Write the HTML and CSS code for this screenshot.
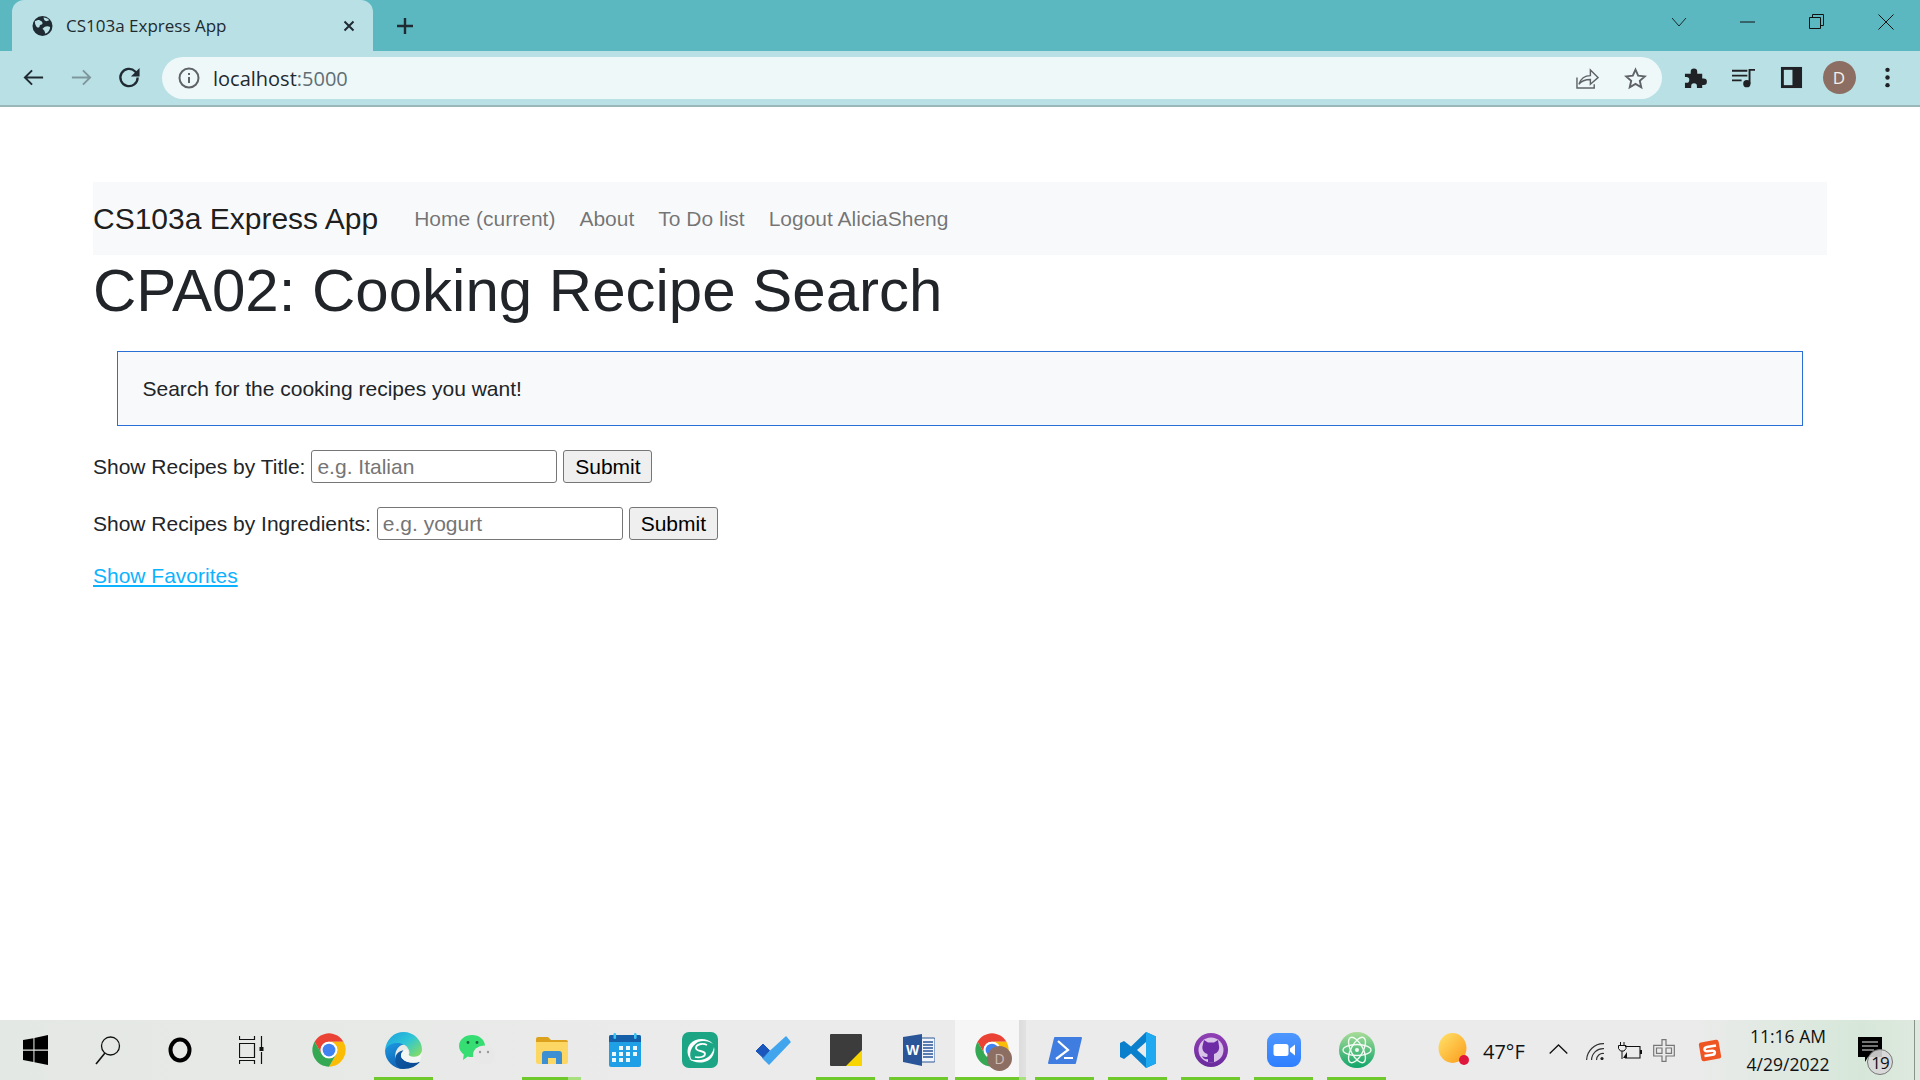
FILE: index.html
```html
<!DOCTYPE html>
<html lang="en">
<head>
<meta charset="utf-8">
<title>CS103a Express App</title>
<link rel="stylesheet" href="styles.css">
</head>
<body>
<header class="browser">
  <div class="tabstrip">
    <div class="tab">
      <svg class="favicon" viewBox="0 0 22 22"><circle cx="11" cy="11" r="10.5" fill="#202a33"/><path d="M3 6c2-1 4-2 5-1s3 1 3 3-3 1-3 3-2 2-3 1-2-3-2-6zM12 2c2 0 5 1 6 3l-3 1-2-1zM13 12c2-1 4-1 6 0 0 3-2 6-5 7l-1-3-2-2z" fill="#b8e0e5"/></svg>
      <span class="tab-title">CS103a Express App</span>
      <svg class="tab-close" viewBox="0 0 12 12"><path d="M1.500 1.500l9 9M10.500 1.500l-9 9" stroke="#202a33" stroke-width="2"/></svg>
    </div>
    <svg class="newtab" viewBox="0 0 18 18"><path d="M9 1v16M1 9h16" stroke="#202a33" stroke-width="2.400"/></svg>
    <div class="winctl">
      <svg class="winbtn chev" viewBox="0 0 16 16"><path d="M1 4l7 8 7-8" fill="none" stroke="#1a2a2c" stroke-width="1"/></svg>
      <svg class="winbtn" viewBox="0 0 16 16"><path d="M0 8h15" stroke="#111" stroke-width="1"/></svg>
      <svg class="winbtn" viewBox="0 0 16 16"><path d="M.5 3.500h11v11H.5zM3.500 3.500V.5h11v11h-3" fill="none" stroke="#111" stroke-width="1"/></svg>
      <svg class="winbtn" viewBox="0 0 16 16"><path d="M.5.5l15 15M15.500.5l-15 15" stroke="#111" stroke-width="1"/></svg>
    </div>
  </div>
  <div class="toolbar">
    <div class="btn"><svg viewBox="0 0 24 24"><path d="M22 12H3M10.500 4.500L3 12l7.500 7.500" fill="none" stroke="#202a33" stroke-width="2"/></svg></div>
    <div class="btn"><svg viewBox="0 0 24 24"><path d="M2 12h19M13.500 4.500L21 12l-7.500 7.500" fill="none" stroke="#7f979c" stroke-width="2"/></svg></div>
    <div class="btn"><svg viewBox="0 0 24 24"><path d="M20.500 12a9 9 0 1 1-2.600-6.300L21 9" fill="none" stroke="#202a33" stroke-width="2.400"/><path d="M22.500 2v9h-9z" fill="#202a33"/></svg></div>
    <div class="omnibox">
      <svg class="info" viewBox="0 0 22 22"><circle cx="11" cy="11" r="9.500" fill="none" stroke="#5f6368" stroke-width="2"/><path d="M10 10h2v6h-2zM10 6h2v2h-2z" fill="#5f6368"/></svg>
      <span class="url">localhost<span class="url-port">:5000</span></span>
      <div class="btn right-first"><svg viewBox="0 0 24 24"><path d="M1 11v11h18v-4M3 18c2-6 6-9 12-9V3l8 8-8 7v-5c-4 0-9 1-12 5z" fill="none" stroke="#5f6368" stroke-width="1.500"/></svg></div>
      <div class="btn"><svg viewBox="0 0 24 24"><path d="M12 2.800l2.800 6.300 6.900.7-5.200 4.600 1.500 6.800-6-3.500-6 3.500 1.500-6.800-5.200-4.600 6.900-.7z" fill="none" stroke="#5f6368" stroke-width="2"/></svg></div>
    </div>
    <div class="btn"><svg viewBox="0 0 24 24"><path d="M1 8h6V6a3.400 3.400 0 0 1 6.800 0v2h5.200v5h1.500a3.400 3.400 0 0 1 0 6.800H19V23h-5.500v-2a3 3 0 0 0-6 0v2H1v-5.500h1.500a3 3 0 0 0 0-6H1z" fill="#202124"/></svg></div>
    <div class="btn"><svg viewBox="0 0 24 24"><path d="M0 5h16M0 10h16M0 15h10" stroke="#202124" stroke-width="2"/><circle cx="15.500" cy="18.500" r="3.800" fill="#202124"/><path d="M18.300 18.500V4H24" fill="none" stroke="#202124" stroke-width="2"/></svg></div>
    <div class="btn"><svg viewBox="0 0 24 24"><path d="M1 1h22v22H1z" fill="#202124"/><path d="M4 4h9v16H4z" fill="#b8e0e5"/></svg></div>
    <div class="btn"><span class="avatar">D</span></div>
    <div class="btn"><svg viewBox="0 0 24 24"><circle cx="12" cy="4" r="2.300" fill="#202124"/><circle cx="12" cy="12" r="2.300" fill="#202124"/><circle cx="12" cy="20" r="2.300" fill="#202124"/></svg></div>
  </div>
</header>

<main class="page">
  <nav class="navbar">
    <a class="brand">CS103a Express App</a>
    <a class="navlink">Home (current)</a>
    <a class="navlink">About</a>
    <a class="navlink">To Do list</a>
    <a class="navlink">Logout AliciaSheng</a>
  </nav>
  <h1 class="title">CPA02: Cooking Recipe Search</h1>
  <div class="alert">Search for the cooking recipes you want!</div>
  <form class="search-form">
    <label>Show Recipes by Title:</label>
    <input class="field" placeholder="e.g. Italian">
    <button class="submit" type="button">Submit</button>
  </form>
  <form class="search-form">
    <label>Show Recipes by Ingredients:</label>
    <input class="field" placeholder="e.g. yogurt">
    <button class="submit" type="button">Submit</button>
  </form>
  <a class="fav" href="#">Show Favorites</a>
</main>

<footer class="taskbar">
  <div class="sys"><svg class="win-logo" viewBox="0 0 24 24" width="25" height="30" preserveAspectRatio="none"><path d="M0 4l10-1.500V11.500H0zM11 2.300L24 0v11.500H11zM0 12.500h10v9L0 20zM11 12.500h13V24l-13-2.200z" fill="#000"/></svg></div>
  <div class="sys"><svg viewBox="0 0 26 30" width="26" height="30"><circle cx="15.500" cy="11" r="9" fill="none" stroke="#111" stroke-width="1.300"/><path d="M10 18L1 29" stroke="#111" stroke-width="1.600"/></svg></div>
  <div class="sys"><svg viewBox="0 0 24 26" width="24" height="26"><ellipse cx="12" cy="13" rx="9.500" ry="10.500" fill="none" stroke="#000" stroke-width="4"/></svg></div>
  <div class="sys"><svg viewBox="0 0 26 28" width="26" height="28"><path d="M.5 0v3.500h15V0M.5 7.500h15v14H.5zM.5 28v-3.500h15V28M22.500 0v11M22.500 16v12" fill="none" stroke="#111" stroke-width="1.200"/><rect x="20.500" y="11" width="4" height="4" fill="#111"/></svg></div>

  <div class="apps">
    <div class="app first"><svg viewBox="0 0 48 48" width="34" height="34"><use href="#chrome-mark"/></svg></div>
    <div class="app on nudge2">
      <svg viewBox="0 0 36 36" width="37" height="37">
        <defs>
          <linearGradient id="eg1" x1="0" y1="0" x2="1" y2=".8"><stop offset="0" stop-color="#1a9fe0"/><stop offset=".55" stop-color="#2fc5d6"/><stop offset="1" stop-color="#7fdc6a"/></linearGradient>
          <linearGradient id="eg2" x1="0" y1="0" x2=".4" y2="1"><stop offset="0" stop-color="#1e9fe6"/><stop offset="1" stop-color="#0f62b4"/></linearGradient>
          <linearGradient id="eg3" x1="0" y1="0" x2="1" y2="1"><stop offset="0" stop-color="#0e5da8"/><stop offset="1" stop-color="#0a4790"/></linearGradient>
        </defs>
        <path d="M0 18C0 28 8 36 18 36C13 33 9 28 10 22C11 14 18 10 24 13C17 5 2 8 0 18z" fill="url(#eg2)"/>
        <path d="M10 25C11 20 15 18 18 18C15 21 15 24 17 26C20 30 28 31 34 29C31 33 25 36 18 36C13 36 9 31 10 25z" fill="url(#eg3)"/>
        <path d="M18 18C20 16 23 17 23 21C23 23 25 24 28 24C31 24 34 23 36 20L34 29C28 31 20 30 17 26C15 24 15 21 18 18z" fill="#f4f6f4"/>
        <path d="M0 18C1 7 9 0 18 0C28 0 36 8 36 17C36 21 33 24 28 24C25 24 23 23 23 22C24 21 24 19 23 17C19 8 3 9 0 18z" fill="url(#eg1)"/>
      </svg>
    </div>
    <div class="app">
      <svg viewBox="0 0 36 30" width="36" height="30">
        <path d="M13 0c7.200 0 13 4.900 13 11s-5.800 11-13 11c-1.500 0-3-.2-4.300-.6L4 25l.8-5.500C2 17.500 0 14.500 0 11 0 4.900 5.800 0 13 0z" fill="#35dd72"/>
        <circle cx="9" cy="7.500" r="1.400" fill="#17653a"/><circle cx="18" cy="7.500" r="1.400" fill="#17653a"/>
        <ellipse cx="25" cy="20" rx="11" ry="9.500" fill="#e8e8e8"/><path d="M28 28l4 2-1-5z" fill="#e8e8e8"/>
        <circle cx="21" cy="17" r="1.200" fill="#999"/><circle cx="29" cy="17" r="1.200" fill="#999"/>
      </svg>
    </div>
    <div class="app on part nudge2">
      <svg viewBox="0 0 32 27" width="32" height="27">
        <path d="M0 2a2 2 0 0 1 2-2h10l3 3h15a2 2 0 0 1 2 2v3H0z" fill="#dca21e"/>
        <path d="M0 5h32v20a2 2 0 0 1-2 2H2a2 2 0 0 1-2-2z" fill="#fdd764"/>
        <path d="M6 27V17a3 3 0 0 1 3-3h14a3 3 0 0 1 3 3v10h-6v-6h-8v6z" fill="#3d8fd3"/>
      </svg>
    </div>
    <div class="app">
      <svg viewBox="0 0 32 34" width="32" height="34">
        <rect y="2" width="32" height="32" rx="2" fill="#1f9fe6"/>
        <path d="M0 4a2 2 0 0 1 2-2h28a2 2 0 0 1 2 2v5H0z" fill="#155fa8"/>
        <rect x="4.500" width="2.600" height="6" rx="1.300" fill="#3dc4f0"/><rect x="25" width="2.600" height="6" rx="1.300" fill="#3dc4f0"/>
        <g fill="#eef7fc">
          <rect x="10" y="13" width="4" height="4"/><rect x="17" y="13" width="4" height="4"/><rect x="24" y="13" width="4" height="4"/>
          <rect x="3" y="19" width="4" height="4"/><rect x="10" y="19" width="4" height="4"/><rect x="17" y="19" width="4" height="4"/><rect x="24" y="19" width="4" height="4"/>
          <rect x="3" y="25" width="4" height="4"/><rect x="10" y="25" width="4" height="4"/><rect x="17" y="25" width="4" height="4"/>
        </g>
      </svg>
    </div>
    <div class="app nudge2">
      <svg viewBox="0 0 36 36" width="36" height="36">
        <rect width="36" height="36" rx="7" fill="#1ba585"/>
        <path d="M31 12C26 6 14 5 8 12C4 17 5 25 10 29C6 22 9 14 16 10C21 8 27 9 31 12z" fill="#fff"/>
        <path d="M7 27C13 32 25 32 30 25C32 22 33 18 32 15C31 22 25 28 17 28C13 28 10 28 7 27z" fill="#fff"/>
        <path d="M25 13C21 11 14 12 14 16C14 20 23 18 23 22C23 25 17 26 13 25" fill="none" stroke="#fff" stroke-width="1.800"/>
      </svg>
    </div>
    <div class="app">
      <svg viewBox="0 0 36 29" width="36" height="29">
        <path d="M31 1L35 6 14 28 8 22z" fill="#41a5ee" stroke="#41a5ee" stroke-width="1.500" stroke-linejoin="round"/>
        <path d="M1 15l7-7 6.500 6.500-6.500 7z" fill="#1a56bb" stroke="#1a56bb" stroke-width="1" stroke-linejoin="round"/>
      </svg>
    </div>
    <div class="app on">
      <svg viewBox="0 0 32 32" width="32" height="32">
        <rect width="32" height="32" rx="1" fill="#3c3c3c"/>
        <path d="M16 32L32 16v16z" fill="#f9d500"/>
      </svg>
    </div>
    <div class="app on">
      <svg viewBox="0 0 32 32" width="32" height="32">
        <path d="M18 4h13a1 1 0 0 1 1 1v22a1 1 0 0 1-1 1H18z" fill="#f2f5fa" stroke="#2a5699"/>
        <path d="M20 8h10M20 11h10M20 14h10M20 17h10M20 20h10M20 23h10" stroke="#2a5699" stroke-width="1.300"/>
        <path d="M0 3L19 0v32L0 28z" fill="#2a5699"/>
        <text x="9.500" y="21" class="word-w">W</text>
      </svg>
    </div>
    <div class="app on active"><svg viewBox="0 0 48 48" width="34" height="34"><use href="#chrome-mark"/></svg><span class="badge">D</span></div>
    <div class="app on">
      <svg viewBox="0 0 34 27" width="34" height="27">
        <path d="M7 0h26a1 1 0 0 1 1 1l-6 25a1 1 0 0 1-1 1H1a1 1 0 0 1-1-1L6 1a1 1 0 0 1 1-1z" fill="#3f7ee0"/>
        <path d="M10 4l10 9-12 9" fill="none" stroke="#fff" stroke-width="2.200"/>
        <path d="M16 21h9" stroke="#fff" stroke-width="2"/>
      </svg>
    </div>
    <div class="app on">
      <svg viewBox="0 0 36 36" width="36" height="36">
        <path d="M26 0l10 4.500v27L26 36 11 21.500 4 27l-4-2V11l4-2 7 5.500zM26 10l-9 8 9 8z" fill="#0a7fcb"/>
        <path d="M26 0l10 4.500v27L26 36z" fill="#1fa9f0"/>
      </svg>
    </div>
    <div class="app on">
      <svg viewBox="0 0 34 34" width="34" height="34">
        <defs><linearGradient id="gh" x1="0" y1="0" x2="0" y2="1"><stop offset="0" stop-color="#9040b4"/><stop offset="1" stop-color="#6a2a9c"/></linearGradient></defs>
        <circle cx="17" cy="17" r="17" fill="url(#gh)"/>
        <circle cx="17" cy="17" r="12.500" fill="#d9c3e8"/>
        <path d="M10 7l4 2.500h6L24 7l1 6c.7 4-1.500 7-5 8v8.500h-6V26c-3 1-5-1-6-3 2 1 4 1.500 5.500.5V21c-3.500-1-5.700-4-5-8z" fill="#6d2ca6"/>
      </svg>
    </div>
    <div class="app on">
      <svg viewBox="0 0 34 34" width="34" height="34">
        <defs><linearGradient id="zg" x1="0" y1="0" x2="0" y2="1"><stop offset="0" stop-color="#4e97ff"/><stop offset="1" stop-color="#2f7fff"/></linearGradient></defs>
        <rect width="34" height="34" rx="9" fill="url(#zg)"/>
        <rect x="6.500" y="11" width="15" height="12" rx="2.500" fill="#fff"/>
        <path d="M23 15.500l5-4v11l-5-4z" fill="#fff"/>
      </svg>
    </div>
    <div class="app on">
      <svg viewBox="0 0 36 36" width="36" height="36">
        <defs><linearGradient id="ag" x1="0" y1="0" x2="0" y2="1"><stop offset="0" stop-color="#a9dc98"/><stop offset="1" stop-color="#0fa569"/></linearGradient></defs>
        <circle cx="18" cy="18" r="18" fill="url(#ag)"/>
        <g fill="none" stroke="#f2faf2" stroke-width="1.400">
          <ellipse cx="18" cy="18" rx="6" ry="14" transform="rotate(-28 18 18)"/>
          <ellipse cx="18" cy="18" rx="6" ry="14" transform="rotate(28 18 18)"/>
          <ellipse cx="18" cy="18" rx="14" ry="5.500"/>
        </g>
        <circle cx="18" cy="18" r="2" fill="#f2faf2"/>
      </svg>
    </div>
  </div>

  <div class="tray">
    <svg class="sun" viewBox="0 0 32 36"><defs><linearGradient id="sg" x1="0" y1="0" x2="1" y2="1"><stop offset="0" stop-color="#ffe46b"/><stop offset="1" stop-color="#fb9a1a"/></linearGradient></defs><ellipse cx="14.500" cy="16" rx="14" ry="15" fill="url(#sg)"/><circle cx="26" cy="28" r="5" fill="#e0173d"/></svg>
    <span class="temp">47°F</span>
    <svg class="tray-chev" viewBox="0 0 19 10"><path d="M.7 9.500L9.500 1l8.800 8.500" fill="none" stroke="#111" stroke-width="1.300"/></svg>
    <svg class="tray-net" viewBox="0 0 18 17"><g fill="none" stroke="#333" stroke-width="1.200"><path d="M18 .6A17 17 0 0 0 .6 17M18 5.600A11.500 11.500 0 0 0 5.600 17M18 10.500A6.500 6.500 0 0 0 10.500 17"/></g><circle cx="16" cy="15.500" r="1.600" fill="#222"/></svg>
    <svg class="tray-bat" viewBox="0 0 24 17"><path d="M7 4.500h15v11.500H7" fill="none" stroke="#111" stroke-width="1.100"/><path d="M22 8h2v4h-2z" fill="#111"/><path d="M2.500 0v3M6 0v3M.5 3.500h7.500v3L6 9H2.500L.5 6.500zM4 9v8" fill="none" stroke="#111" stroke-width="1"/><path d="M9 10v6H5z" fill="#111"/></svg>
    <svg class="tray-ime" viewBox="0 0 22 23"><path d="M9 .7h4v5.600h8.300v10.700H13v5.300H9V17H.7V6.300H9z" fill="none" stroke="#777" stroke-width="1.200"/><path d="M3.500 9H9v5.300H3.500zM13 9h5.500v5.300H13z" fill="none" stroke="#777" stroke-width="1.200"/></svg>
    <svg class="tray-s" viewBox="0 0 24 23"><rect x="2" y="2" width="20" height="19" rx="2.500" fill="#ef5522" transform="rotate(-10 12 11.500)"/><path d="M18 6.500L9 8c-3.500.6-3 4.400 0 4.200l5.500-.4c3-.2 3.200 3.500 0 4L6.500 17" fill="none" stroke="#fff" stroke-width="2.600"/></svg>
    <div class="clock"><span>11:16 AM</span><span>4/29/2022</span></div>
    <div class="notif">
      <svg viewBox="0 0 24 26" width="24" height="26"><path d="M0 0h24v20H10l-3 5v-5H0z" fill="#000"/><path d="M4 5h16M4 9h16M4 13h12" stroke="#e8e8e8" stroke-width="1.200"/></svg>
      <span class="notif-count">19</span>
    </div>
    <div class="show-desktop"></div>
  </div>
</footer>

<svg class="defs" width="0" height="0">
  <symbol id="chrome-mark" viewBox="0 0 48 48">
    <path d="M3.650 12.250A23.500 23.500 0 0 1 44.350 12.250H24A11.750 11.750 0 0 0 13.820 29.875z" fill="#ea4335"/>
    <path d="M44.350 12.250A23.500 23.500 0 0 1 24 47.500L34.180 29.875A11.750 11.750 0 0 0 24 12.250z" fill="#fbbc05"/>
    <path d="M24 47.500A23.500 23.500 0 0 1 3.650 12.250L13.820 29.875A11.750 11.750 0 0 0 34.180 29.875z" fill="#34a853"/>
    <circle cx="24" cy="24" r="11.750" fill="#fff"/>
    <circle cx="24" cy="24" r="9" fill="#3f82f0"/>
  </symbol>
</svg>
</body>
</html>
```
FILE: styles.css
```css
* { box-sizing: border-box; }
html, body { margin: 0; height: 100%; }
body {
  display: flex;
  flex-direction: column;
  height: 1080px;
  overflow: hidden;
  background: #fff;
  font-family: "Liberation Sans", Arial, sans-serif;
  color: #212529;
}

/* browser chrome */
.browser { flex: none; font-family: "Open Sans", "Noto Sans", sans-serif; }
.tabstrip {
  height: 51px;
  background: #5bb8c1;
  display: flex;
  align-items: center;
  padding-left: 12px;
}
.tab {
  width: 361px;
  height: 51px;
  background: #b8e0e5;
  border-radius: 12px 12px 0 0;
  display: flex;
  align-items: center;
  padding: 0 18px 0 20px;
  gap: 13px;
  align-self: flex-end;
}
.favicon { width: 21px; height: 22px; flex: none; }
.tab-title { font-size: 17px; color: #1f2a30; flex: 1; }
.tab-close { width: 12px; height: 12px; flex: none; }
.newtab { width: 18px; height: 18px; margin-left: 23px; }
.winctl { margin-left: auto; display: flex; align-items: center; height: 51px; }
.winbtn { width: 16px; height: 16px; margin-right: 53px; flex: none; margin-top: -8px; }
.winbtn:last-child { margin-right: 26px; }

.toolbar {
  height: 56px;
  background: #b8e0e5;
  border-bottom: 2px solid #9bb7ba;
  display: flex;
  align-items: flex-start;
  padding: 0 9px;
}
.btn {
  width: 48px;
  height: 42px;
  margin-top: 5px;
  display: flex;
  align-items: center;
  justify-content: center;
  flex: none;
}
.btn svg { width: 23px; height: 23px; }
.omnibox {
  flex: 1;
  height: 42px;
  margin: 6px 9px 0 9px;
  background: #eef8f9;
  border-radius: 21px;
  display: flex;
  align-items: center;
  padding: 0 3px 0 16px;
}
.omnibox .btn { margin-top: 0; }
.info { width: 22px; height: 22px; flex: none; }
.url { font-size: 20px; color: #1f2a30; margin-left: 13px; }
.url-port { color: #5f6f75; }
.right-first { margin-left: auto; }
.avatar {
  width: 33px;
  height: 33px;
  border-radius: 50%;
  background: #8d6e63;
  color: #f4eeec;
  font-size: 17px;
  display: flex;
  align-items: center;
  justify-content: center;
}

/* page */
.page {
  flex: 1;
  padding: 75px 93px 0;
  font-size: 21px;
  line-height: 30px;
}
.navbar {
  height: 73px;
  background: #f8f9fa;
  display: flex;
  align-items: center;
}
.brand { font-size: 30px; color: rgba(0,0,0,.9); margin-right: 24px; }
.navlink { color: rgba(0,0,0,.55); padding: 0 12px; }
.title {
  margin: 0 0 24px;
  font-size: 60px;
  line-height: 72px;
  font-weight: 400;
}
.alert {
  margin: 0 24px 24px;
  height: 75px;
  padding: 22px 24.5px;
  border: 1px solid #2a6fd6;
  background: #f8f9fa;
}
.search-form {
  margin: 0 0 24px;
  height: 33px;
  display: flex;
  align-items: center;
  gap: 6px;
}
.field {
  width: 246px;
  height: 33px;
  padding: 1px 5px;
  border: 1px solid #767676;
  border-radius: 3px;
  font: 21px "Liberation Sans", Arial, sans-serif;
}
.field::placeholder { color: #757575; }
.submit {
  width: 89px;
  height: 33px;
  padding: 0;
  background: #efefef;
  border: 1px solid #767676;
  border-radius: 3px;
  font: 21px "Liberation Sans", Arial, sans-serif;
  color: #000;
}
.fav { color: #0db2ff; display: block; width: fit-content; margin-top: -3px; }

/* taskbar */
.taskbar {
  height: 60px;
  flex: none;
  display: flex;
  background: linear-gradient(90deg, #e4e8e4 0%, #ebebeb 40%, #ebebeb 88%, #d6e7d9 97%, #dfe9df 100%);
}
.sys { width: 72px; height: 60px; display: flex; align-items: center; justify-content: center; flex: none; }
.win-logo { margin-right: 1px; }
.apps { display: flex; flex: none; }
.app {
  position: relative;
  width: 73px;
  height: 60px;
  display: flex;
  align-items: center;
  justify-content: center;
  flex: none;
}
.first { margin-left: 4px; }
.nudge2 { margin-left: 2px; }
.on::after {
  content: "";
  position: absolute;
  left: 7px;
  right: 7px;
  bottom: 0;
  height: 3px;
  background: #6fc92a;
}
.part::after { background: linear-gradient(90deg, #6fc92a 78%, #a9e07e 78%); }
.active { background: linear-gradient(90deg, #f6f6f6 64px, #dcdcdc 64px, #e2e2e2 71px, #ebebeb 71px); }
.active::after { left: 0; right: 2px; background: linear-gradient(90deg, #6fc92a 64px, #a9e07e 64px); }
.badge {
  position: absolute;
  left: 32px;
  top: 26px;
  width: 25px;
  height: 25px;
  border-radius: 50%;
  background: #8d6e63;
  color: #cdbdb6;
  font: 14px "Open Sans", sans-serif;
  display: flex;
  align-items: center;
  justify-content: center;
}
.word-w { font: 700 14px "Liberation Sans", sans-serif; fill: #fff; text-anchor: middle; }

.tray {
  flex: 1;
  display: flex;
  align-items: center;
  position: relative;
  font-family: "Open Sans", "Noto Sans", sans-serif;
  color: #111;
}
.sun { width: 32px; height: 36px; margin-left: 45px; flex: none; }
.temp { font-size: 20px; margin-left: 13px; margin-top: 2px; width: 66px; flex: none; }
.tray-chev { width: 19px; height: 10px; margin-top: -2px; flex: none; }
.tray-net { width: 18px; height: 17px; margin-left: 18px; margin-top: 2px; flex: none; }
.tray-bat { width: 24px; height: 17px; margin-left: 14px; flex: none; }
.tray-ime { width: 22px; height: 23px; margin-left: 11px; flex: none; }
.tray-s { width: 24px; height: 23px; margin-left: 23px; flex: none; }
.clock {
  margin-left: 14px;
  width: 104px;
  display: flex;
  flex-direction: column;
  align-items: center;
  gap: 7px;
  font-size: 17.5px;
  line-height: 21px;
  flex: none;
}
.notif { position: relative; margin-left: 18px; width: 24px; height: 26px; flex: none; }
.notif-count {
  position: absolute;
  left: 9px;
  top: 12px;
  width: 26px;
  height: 26px;
  border-radius: 50%;
  background: rgba(215,215,215,.9);
  border: 1px solid #777;
  font-size: 17px;
  letter-spacing: -1px;
  display: flex;
  align-items: center;
  justify-content: center;
}
.show-desktop { position: absolute; right: 5px; top: 0; bottom: 0; width: 1px; background: #8a938b; }
.defs { position: absolute; }
```
